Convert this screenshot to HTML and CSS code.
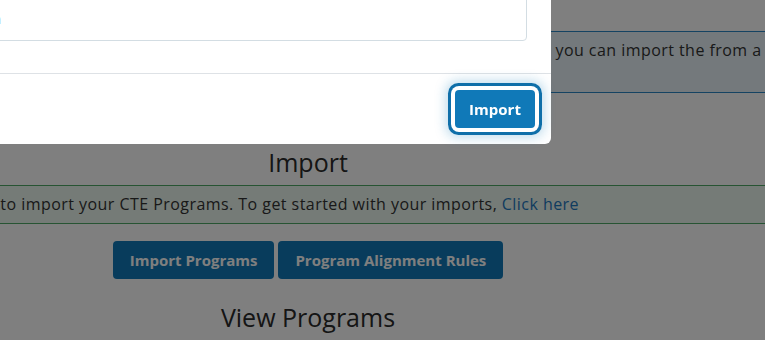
FILE: index.html
```html
<!DOCTYPE html>
<html lang="en">
<head>
<meta charset="utf-8">
<title>Import Programs</title>
<link rel="stylesheet" href="styles.css">
</head>
<body>
<main class="page">
  <div class="alert alert-info">To add new programs, download the import template, and complete it with program data, or you can import the from a previous year.</div>
  <h2 class="title">Import</h2>
  <div class="alert alert-success">Use the options below to import your CTE Programs. To get started with your imports, <a href="#" class="link">Click here</a></div>
  <div class="actions">
    <button class="btn">Import Programs</button>
    <button class="btn">Program Alignment Rules</button>
  </div>
  <h2 class="title">View Programs</h2>
</main>
<div class="backdrop"></div>
<div class="modal">
  <div class="modal-header"><h5 class="modal-title">Import Programs</h5></div>
  <div class="modal-body">
    <label class="label" for="src">Import Source</label>
    <input id="src" class="input" type="text" value="Upload Program Information">
  </div>
  <div class="modal-footer">
    <button class="btn btn-focus">Import</button>
  </div>
</div>
</body>
</html>
```
FILE: styles.css
```css
html, body {
  margin: 0;
  padding: 0;
  overflow: hidden;
  background: #fff;
  font-family: "Open Sans", "Noto Sans", sans-serif;
}

.page {
  width: 1000px;
  margin-left: -192px;
  padding-top: 31px;
  color: #2e2e2e;
}

.alert {
  padding: 7px 16px 7px 12px;
  font-size: 16px;
  letter-spacing: 0.45px;
  line-height: 23px;
  color: #333;
}

.alert-info {
  background: #e8f3f8;
  border-top: 1px solid #2a86c4;
  border-bottom: 1px solid #2a86c4;
  margin-bottom: 51px;
}

.alert-success {
  background: #eaf7ee;
  border-top: 1px solid #4fa866;
  border-bottom: 1px solid #4fa866;
  margin-bottom: 17px;
}

.link {
  color: #1f78be;
  text-decoration: none;
}

.title {
  margin: 0 0 5px;
  font-size: 25px;
  line-height: 36px;
  font-weight: 400;
  text-align: center;
  color: #2a2a2a;
}

.actions {
  display: flex;
  justify-content: center;
  gap: 4px;
  margin-bottom: 20px;
}

.btn {
  height: 38px;
  padding: 0 17px;
  border: 0;
  border-radius: 4px;
  background: #1079b8;
  color: #fff;
  font-family: "Open Sans", "Noto Sans", sans-serif;
  font-size: 15px;
  font-weight: 700;
}

.backdrop {
  position: fixed;
  inset: 0;
  background: rgba(0, 0, 0, 0.5);
}

.modal {
  position: fixed;
  left: -249px;
  bottom: 196px;
  width: 800px;
  background: #fff;
  border-radius: 6px;
}

.modal-header {
  padding: 16px 24px;
  border-bottom: 1px solid #dee2e6;
}

.modal-title {
  margin: 0;
  font-size: 20px;
  font-weight: 500;
}

.modal-body {
  padding: 16px 24px 24px;
}

.label {
  display: block;
  margin-bottom: 6px;
  font-size: 14px;
  color: #333;
}

.input {
  display: block;
  box-sizing: border-box;
  width: 100%;
  height: 46px;
  margin-bottom: 8px;
  padding: 0 12px;
  border: 1px solid #d3dde3;
  border-radius: 4px;
  font-family: "Open Sans", "Noto Sans", sans-serif;
  font-size: 15px;
  letter-spacing: 0.45px;
  color: #555;
}

.modal-footer {
  display: flex;
  justify-content: flex-end;
  padding: 16px;
  border-top: 1px solid #dee2e6;
}

.btn-focus {
  padding: 0 14px;
  width: 80px;
  box-shadow: 0 0 0 4px #fff, 0 0 0 7px #0f6fa9, 0 0 12px 9px rgba(16, 121, 184, 0.28);
}
```
